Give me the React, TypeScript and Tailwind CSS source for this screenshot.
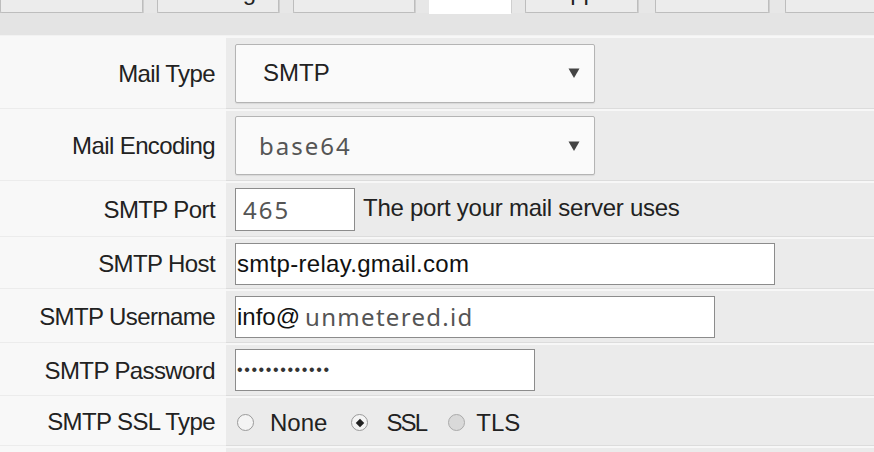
const sans = { fontFamily: '"Liberation Sans", Arial, sans-serif' }

const tabs = [
  { w: "w-[143px]", gap: "", label: "General" },
  { w: "w-[122px]", gap: "w-[14px]", label: "Mailing" },
  { w: "w-[122px]", gap: "w-[14px]", label: "Server" },
  { w: "w-[82px]", gap: "w-[14px]", label: "Mail", active: true },
  { w: "w-[113px]", gap: "w-[14px]", label: "Apps" },
  { w: "w-[114px]", gap: "w-[17px]", label: "Cache" },
  { w: "w-[100px]", gap: "w-[16px]", label: "Other" },
]

const Label = ({ text }: { text: string }) => (
  <div className="flex items-center justify-end pr-[11px] pt-[3px] bg-[#f8f8f8] border-b border-[#ececec] text-[24px] tracking-[-0.6px] text-[#222]">
    {text}
  </div>
)

const Cell = ({ children }: { children: React.ReactNode }) => (
  <div className="flex items-center pl-[9px] bg-[#ebebeb] border-t-2 border-t-[#f7f7f7] border-b border-b-[#dcdcdc]">
    {children}
  </div>
)

const Select = ({ value, grey }: { value: string; grey?: boolean }) => (
  <div className="flex items-center justify-between w-[360px] h-[59px] bg-[#fafafa] border border-[#b4b4b4] rounded-[2px] shadow-[0_1px_1px_rgba(0,0,0,0.08)] pl-[23px] pr-[14px]">
    {grey ? (
      <span className="text-[24px] tracking-[2px] text-[#555] font-['Noto_Sans']">{value}</span>
    ) : (
      <span className="text-[24px] text-[#222] pl-[4px]">{value}</span>
    )}
    <svg width="12" height="12" viewBox="0 0 12 12">
      <path d="M0.5 1.5 L11.5 1.5 L6 11 Z" fill="#444" />
    </svg>
  </div>
)

const Radio = ({ checked, disabled }: { checked?: boolean; disabled?: boolean }) => (
  <span
    className={`relative inline-flex items-center justify-center w-[17px] h-[17px] rounded-full border ${
      disabled ? "border-[#aaa] bg-[#d9d9d9]" : "border-[#9a9a9a] bg-[#f4f4f4]"
    }`}
  >
    {checked && <span className="w-[6px] h-[6px] bg-[#222] rotate-45" />}
  </span>
)

export default function App() {
  return (
    <div className="w-[874px] h-[452px] overflow-hidden bg-white" style={sans}>
      {/* tab strip, mostly scrolled off the top */}
      <div className="flex h-[13px] bg-[#e4e4e4] border-b border-[#c4c4c4]">
        {tabs.map((t) => (
          <div key={t.label} className="flex shrink-0">
            {t.gap && <div className={`${t.gap} h-[13px] border-l border-[#cfcfcf] bg-[#e7e7e7]`} />}
            <div
              className={`${t.w} overflow-hidden flex justify-center ${
                t.active
                  ? "bg-white -mb-px h-[14px]"
                  : "h-[13px] bg-[#ececec] border-x border-b border-[#bdbdbd] rounded-b-[2px]"
              }`}
            >
              <span className="-mt-[20px] text-[24px] leading-none text-[#222]">{t.label}</span>
            </div>
          </div>
        ))}
      </div>
      <div className="h-[23px] bg-[#e4e4e4] border-b border-[#f2f2f2]" />

      <div className="grid grid-cols-[226px_1fr] grid-rows-[73px_72px_56px_52px_54px_53px_50px_20px]">
        <Label text="Mail Type" />
        <Cell>
          <Select value="SMTP" />
        </Cell>

        <Label text="Mail Encoding" />
        <Cell>
          <Select value="base64" grey />
        </Cell>

        <Label text="SMTP Port" />
        <Cell>
          <div className="flex items-center w-[120px] h-[43px] bg-white border border-[#8c8c8c] pl-[7px] text-[24px] tracking-[2px] text-[#555] font-['Noto_Sans']">
            465
          </div>
          <span className="ml-[8px] text-[24px] tracking-[-0.25px] text-[#222] mb-[4px]">
            The port your mail server uses
          </span>
        </Cell>

        <Label text="SMTP Host" />
        <Cell>
          <div className="flex items-center w-[540px] h-[42px] bg-white border border-[#8c8c8c] pl-[1px] text-[24px] tracking-[0.3px] text-[#111]">
            smtp-relay.gmail.com
          </div>
        </Cell>

        <Label text="SMTP Username" />
        <Cell>
          <div className="flex items-center w-[480px] h-[42px] bg-white border border-[#8c8c8c] pl-[1px] text-[24px] text-[#111]">
            info@
            <span className="ml-[5px] tracking-[1.3px] text-[#555] font-['Noto_Sans']">unmetered.id</span>
          </div>
        </Cell>

        <Label text="SMTP Password" />
        <Cell>
          <div className="flex items-center w-[300px] h-[42px] bg-white border border-[#8c8c8c] pl-[1px] text-[16px] tracking-[1.6px] text-[#333]">
            •••••••••••••
          </div>
        </Cell>

        <Label text="SMTP SSL Type" />
        <Cell>
          <div className="flex items-center text-[24px] text-[#222] pl-[2px] pt-[2px]">
            <Radio />
            <span className="ml-[16px]">None</span>
            <span className="ml-[24px] flex"><Radio checked /></span>
            <span className="ml-[18px] tracking-[-1.8px]">SSL</span>
            <span className="ml-[22px] flex"><Radio disabled /></span>
            <span className="ml-[11px]">TLS</span>
          </div>
        </Cell>

        <div className="bg-[#f8f8f8]" />
        <div className="bg-[#ebebeb] border-t-2 border-t-[#f7f7f7]" />
      </div>
    </div>
  )
}
